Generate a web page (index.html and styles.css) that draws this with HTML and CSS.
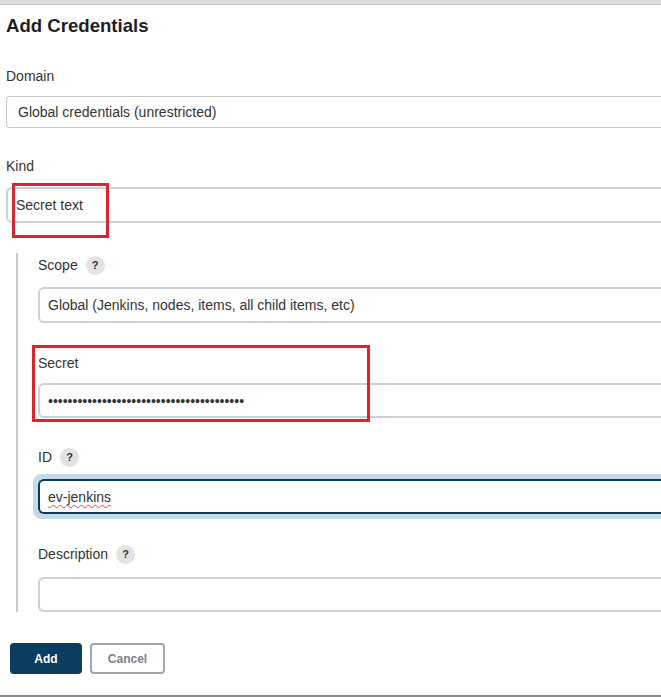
FILE: index.html
```html
<!DOCTYPE html>
<html lang="en">
<head>
<meta charset="utf-8">
<title>Add Credentials</title>
<link rel="stylesheet" href="styles.css">
</head>
<body>
<div class="topbar"></div>
<div class="page">
  <h1 class="title">Add Credentials</h1>

  <div class="label-row label-domain"><span class="label">Domain</span></div>
  <select class="select select-domain"><option>Global credentials (unrestricted)</option></select>

  <div class="label-row label-kind"><span class="label">Kind</span></div>
  <div class="kind-wrap">
    <select class="select select-kind"><option>Secret text</option></select>
    <div class="highlight highlight-kind"></div>
  </div>

  <div class="nested">
    <div class="label-row label-scope"><span class="label">Scope</span><span class="help">?</span></div>
    <select class="select select-scope"><option>Global (Jenkins, nodes, items, all child items, etc)</option></select>

    <div class="secret-wrap">
      <div class="label-row label-secret"><span class="label">Secret</span></div>
      <input class="input input-secret" type="text" value="••••••••••••••••••••••••••••••••••••••••">
      <div class="highlight highlight-secret"></div>
    </div>

    <div class="label-row label-id"><span class="label">ID</span><span class="help">?</span></div>
    <div class="id-wrap">
      <input class="input input-id" type="text" value="ev-jenkins">
      <span class="spell" aria-hidden="true">ev-jenkins</span>
    </div>

    <div class="label-row label-desc"><span class="label">Description</span><span class="help">?</span></div>
    <input class="input input-desc" type="text" value="">
  </div>

  <div class="buttons">
    <button class="btn btn-primary" type="button">Add</button>
    <button class="btn btn-secondary" type="button">Cancel</button>
  </div>
</div>
<div class="footer-line"></div>
</body>
</html>
```

FILE: styles.css
```css
html, body {
  margin: 0;
  padding: 0;
  overflow: hidden;
  background: #ffffff;
}

body {
  font-family: "Liberation Sans", Arial, sans-serif;
  font-size: 14px;
  color: #333333;
  width: 661px;
  height: 697px;
  position: relative;
}

.topbar {
  height: 4px;
  background: #dcdcdc;
  border-bottom: 1px solid #cdcdcd;
}

.page {
  padding-left: 6px;
  width: 655px;
}

.title {
  margin: 10px 0 0;
  font-size: 18.6px;
  line-height: 22px;
  font-weight: bold;
  color: #1f1f1f;
}

.label-row {
  display: flex;
  align-items: center;
  height: 18px;
  line-height: 18px;
}

.label {
  font-size: 14px;
  color: #333333;
}

.help {
  display: inline-flex;
  align-items: center;
  justify-content: center;
  width: 19px;
  height: 19px;
  border-radius: 50%;
  background: #e3e3e3;
  color: #333;
  font-weight: bold;
  font-size: 11px;
  margin-left: 8px;
}

.label-domain { margin-top: 30px; }
.label-kind { margin-top: 29px; }

.select,
.input {
  display: block;
  box-sizing: border-box;
  width: 100%;
  font-family: "Liberation Sans", Arial, sans-serif;
  font-size: 14px;
  color: #333333;
  background: #ffffff;
  margin: 0;
  outline: none;
  -webkit-appearance: none;
  appearance: none;
}

.select-domain {
  margin-top: 11px;
  height: 32px;
  border: 1px solid #c6c8ca;
  border-right: none;
  border-radius: 4px 0 0 4px;
  padding: 0 0 0 11px;
}

.kind-wrap {
  position: relative;
  margin-top: 12px;
}

.select-kind {
  height: 36px;
  border: 2px solid #cdd1d4;
  border-right: none;
  border-radius: 6px 0 0 6px;
  padding: 0 0 0 8px;
}

.highlight {
  position: absolute;
  box-sizing: border-box;
  border: 3px solid #d8252e;
  pointer-events: none;
}

.highlight-kind {
  left: 6px;
  top: -4px;
  width: 97px;
  height: 55px;
}

.nested {
  margin-top: 30px;
  margin-left: 10px;
  border-left: 2px solid #c9c9c9;
  padding-left: 20px;
  padding-top: 3px;
}

.select-scope,
.input {
  height: 36px;
  border: 2px solid #cdd1d4;
  border-right: none;
  border-radius: 6px 0 0 6px;
  padding: 0 0 0 8px;
}

.select-scope { margin-top: 13px; }

.secret-wrap {
  position: relative;
  margin-top: 31px;
}

.input-secret {
  margin-top: 11px;
  height: 35px;
}

.highlight-secret {
  left: -6px;
  top: -9px;
  width: 338px;
  bottom: -4px;
}

.label-id { margin-top: 30px; }

.id-wrap {
  position: relative;
  margin-top: 13px;
}

.input-id {
  height: 35px;
  border-color: #0c3a5c;
  box-shadow: -5px 0 0 0 #c3dbe9, 0 -5px 0 0 #c3dbe9, 0 5px 0 0 #c3dbe9, -3px -3px 0 2px #c3dbe9, -3px 3px 0 2px #c3dbe9;
}

.spell {
  position: absolute;
  left: 10px;
  top: 9px;
  font-size: 14px;
  line-height: 16px;
  color: transparent;
  text-decoration: underline wavy #e0484f;
  text-decoration-thickness: 1px;
  text-underline-offset: 3px;
  pointer-events: none;
}

.label-desc { margin-top: 31px; }

.input-desc {
  margin-top: 14px;
  height: 35px;
}

.buttons {
  display: flex;
  gap: 8px;
  margin-top: 31px;
  margin-left: 4px;
}

.btn {
  box-sizing: border-box;
  height: 31px;
  font-family: "Liberation Sans", Arial, sans-serif;
  font-size: 12px;
  font-weight: bold;
  border-radius: 4px;
  padding: 0;
  cursor: pointer;
}

.btn-primary {
  width: 72px;
  background: #0a3d60;
  border: 2px solid #0a3d60;
  color: #ffffff;
}

.btn-secondary {
  width: 75px;
  background: #ffffff;
  border: 2px solid #a0a7ae;
  color: #7b8189;
}

.footer-line {
  position: absolute;
  left: 0;
  right: 0;
  bottom: 0;
  height: 2px;
  background: #8c8c8c;
}
```
